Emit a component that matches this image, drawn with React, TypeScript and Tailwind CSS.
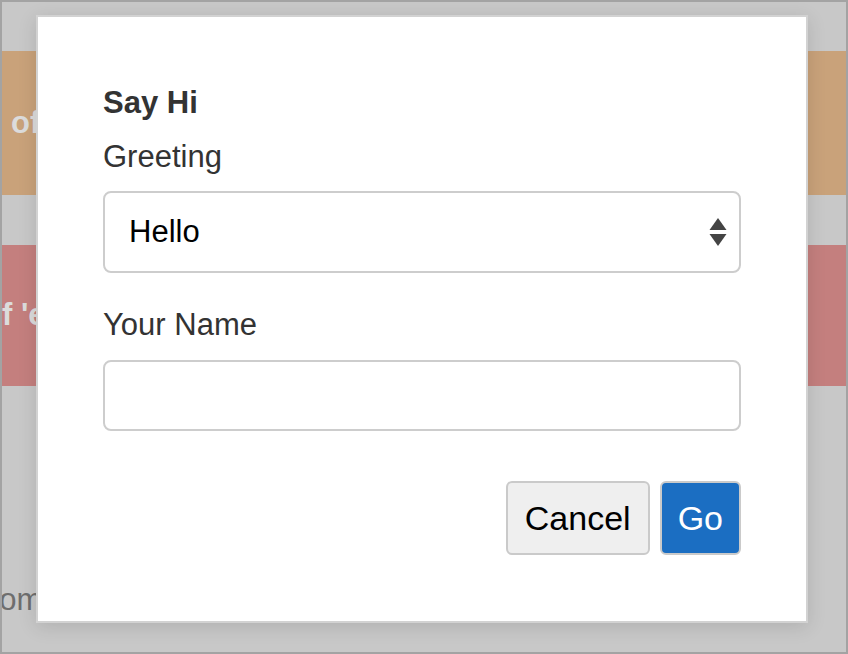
import React from "react";

export default function App() {
  const font = { fontFamily: '"Liberation Sans", Arial, Helvetica, sans-serif' };
  return (
    <div
      className="relative w-[848px] h-[654px] overflow-hidden border-2 border-[#a3a3a3] bg-[#c8c8c8]"
      style={font}
    >
      {/* background page */}
      <div className="flex flex-col">
        <div className="h-[49px]" />
        <div className="h-[144px] bg-[#c9a27a] flex items-center pl-[9px] text-[31px] font-bold text-[#dcdcdc] whitespace-nowrap">
          of the page
        </div>
        <div className="h-[50px]" />
        <div className="h-[141px] bg-[#c47f7e] flex items-center pl-0 text-[31px] font-bold text-[#dcdcdc] whitespace-nowrap">
          f 'error'
        </div>
        <div className="mt-[196px] h-[36px] leading-[36px] text-[31px] text-[#6e6e6e] whitespace-nowrap">
          <span className="-ml-[32px]">From</span>
        </div>
      </div>

      {/* modal */}
      <div className="absolute left-[34px] top-[13px] w-[772px] h-[608px] border-2 border-[#d2d2d2] bg-white shadow-[0_4px_18px_rgba(0,0,0,0.12)]">
        <div className="flex flex-col px-[65px] pt-[68px]">
          <div className="text-[31px] font-bold text-[#333] leading-[36px]">Say Hi</div>
          <div className="mt-[18px] text-[31px] text-[#333] leading-[36px]">Greeting</div>
          <div className="mt-[16px] relative h-[82px] rounded-[8px] border-2 border-[#cdcdcd] flex items-center pl-[24px] text-[31px] text-black">
            Hello
            <svg
              className="absolute right-[12px] top-1/2 -translate-y-1/2"
              width="18"
              height="30"
              viewBox="0 0 18 30"
            >
              <polygon points="9,1 17.5,13 0.5,13" fill="#444" />
              <polygon points="0.5,17 17.5,17 9,29" fill="#444" />
            </svg>
          </div>
          <div className="mt-[34px] text-[31px] text-[#333] leading-[36px]">Your Name</div>
          <div className="mt-[17px] h-[71px] rounded-[8px] border-2 border-[#cdcdcd]" />
          <div className="mt-[50px] flex justify-end gap-[10px]">
            <button className="h-[74px] px-[17px] rounded-[6px] border-2 border-[#cacaca] bg-[#efefef] text-[34px] text-black">
              Cancel
            </button>
            <button className="h-[74px] px-[16px] rounded-[6px] border-2 border-[#cacaca] bg-[#1b6ec2] text-[34px] text-white">
              Go
            </button>
          </div>
        </div>
      </div>
    </div>
  );
}
